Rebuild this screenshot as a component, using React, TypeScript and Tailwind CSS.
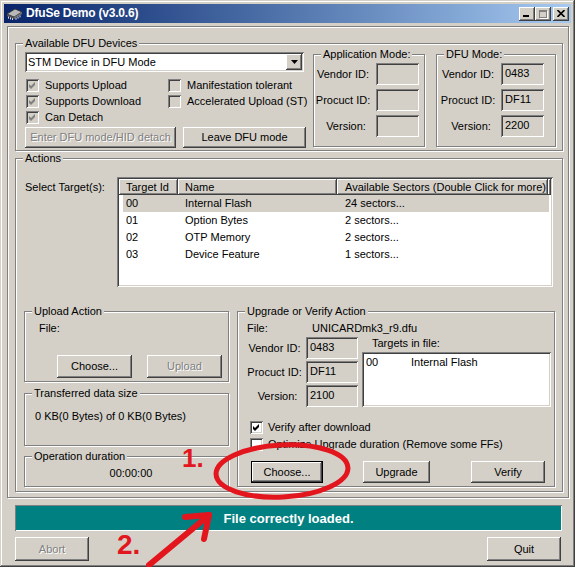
import React from "react";

const raised =
  "bg-[#d4d0c8] shadow-[inset_-1px_-1px_#404040,inset_1px_1px_#fff,inset_-2px_-2px_#808080,inset_2px_2px_#d4d0c8]";
const sunken =
  "shadow-[inset_1px_1px_#808080,inset_-1px_-1px_#fff,inset_2px_2px_#404040,inset_-2px_-2px_#d4d0c8]";
const etched = "border border-[#808080] shadow-[1px_1px_0_#fff,inset_1px_1px_0_#fff]";
const dim = "text-[#808080] [text-shadow:1px_1px_0_#fff]";

type Kids = { children?: React.ReactNode; className?: string };

function Group({ label, className = "", children }: Kids & { label?: string }) {
  return (
    <div className={`relative shrink-0 ${etched} ${className}`}>
      {label && (
        <span className="absolute left-[7px] top-[-7px] whitespace-nowrap bg-[#d4d0c8] px-[2px] leading-[13px]">
          {label}
        </span>
      )}
      {children}
    </div>
  );
}

function Btn({
  children,
  className = "",
  disabled = false,
  def = false,
}: Kids & { disabled?: boolean; def?: boolean }) {
  return (
    <button
      type="button"
      className={`flex shrink-0 items-center justify-center ${raised} ${def ? "border border-black" : ""} ${
        disabled ? dim : "text-black"
      } ${className}`}
    >
      {children}
    </button>
  );
}

function Check({ checked = false, disabled = false }: { checked?: boolean; disabled?: boolean }) {
  return (
    <div
      className={`flex h-[13px] w-[13px] shrink-0 items-center justify-center ${sunken} ${
        disabled ? "bg-[#d4d0c8]" : "bg-white"
      }`}
    >
      {checked && (
        <svg width="7" height="7" viewBox="0 0 7 7">
          <path d="M0 2 L2 4 L6 0 L6 3 L2 7 L0 5 Z" fill={disabled ? "#808080" : "#000"} />
        </svg>
      )}
    </div>
  );
}

function Field({ value = "", className = "" }: { value?: string; className?: string }) {
  return (
    <div className={`h-[22px] shrink-0 bg-[#d4d0c8] pl-[4px] pt-[4px] ${sunken} ${className}`}>{value}</div>
  );
}

function ModeFields({ values }: { values: string[] }) {
  const names = ["Vendor ID:", "Procuct ID:", "Version:"];
  return (
    <div className="flex flex-col gap-[4px] pt-[8px]">
      {names.map((n, i) => (
        <div key={n} className="flex items-center">
          <div className={`w-[56px] text-center ${i === 2 ? "pl-[6px]" : ""}`}>{n}</div>
          <Field value={values[i]} className="ml-[5px] w-[43px]" />
        </div>
      ))}
    </div>
  );
}

const targets = [
  ["00", "Internal Flash", "24 sectors..."],
  ["01", "Option Bytes", "2 sectors..."],
  ["02", "OTP Memory", "2 sectors..."],
  ["03", "Device Feature", "1 sectors..."],
];

function ChipIcon() {
  return (
    <svg width="17" height="13" viewBox="0 0 17 13">
      <polygon points="1,7 9,2 16,5 8,10" fill="#b8b8b8" stroke="#303030" strokeWidth="0.8" />
      <polygon points="1,7 8,10 8,12 1,9" fill="#505050" />
      <polygon points="8,10 16,5 16,7 8,12" fill="#707070" />
      <g stroke="#e0e0e0" strokeWidth="1">
        <line x1="2.5" y1="9.6" x2="2.5" y2="11.6" />
        <line x1="4.5" y1="10.4" x2="4.5" y2="12.4" />
        <line x1="6.5" y1="11.2" x2="6.5" y2="13" />
        <line x1="10" y1="10.8" x2="10" y2="12.8" />
        <line x1="12" y1="9.6" x2="12" y2="11.6" />
        <line x1="14" y1="8.4" x2="14" y2="10.4" />
      </g>
    </svg>
  );
}

function TitleBar() {
  return (
    <div className="flex h-[19px] items-center bg-linear-to-r from-[#0a246a] to-[#a6caf0] pl-[2px] pr-[2px]">
      <ChipIcon />
      <span className="ml-[3px] text-[12px] font-bold tracking-[-0.2px] text-white">DfuSe Demo (v3.0.6)</span>
      <div className="ml-auto flex items-center">
        <div className={`relative h-[14px] w-[16px] ${raised}`}>
          <div className="absolute left-[4px] top-[8px] h-[2px] w-[6px] bg-black" />
        </div>
        <div className={`relative h-[14px] w-[16px] ${raised}`}>
          <div className="absolute left-[4px] top-[3px] h-[8px] w-[8px] border border-t-2 border-[#808080] shadow-[1px_1px_0_#fff]" />
        </div>
        <div className={`ml-[2px] flex h-[14px] w-[16px] items-center justify-center ${raised}`}>
          <svg width="8" height="7" viewBox="0 0 8 7">
            <path d="M0.5 0 L7.5 7 M7.5 0 L0.5 7" stroke="#000" strokeWidth="1.6" />
          </svg>
        </div>
      </div>
    </div>
  );
}

function DevicesGroup() {
  return (
    <Group label="Available DFU Devices" className="h-[108px] w-[548px]">
      <div className="flex pl-[9px] pt-[8px]">
        <div className="flex w-[281px] shrink-0 flex-col">
          <div className={`flex h-[20px] w-[279px] items-center bg-white pl-[3px] pr-[2px] ${sunken}`}>
            <span>STM Device in DFU Mode</span>
            <div className={`ml-auto flex h-[16px] w-[16px] items-center justify-center ${raised}`}>
              <svg width="7" height="4" viewBox="0 0 7 4">
                <polygon points="0,0 7,0 3.5,4" fill="#000" />
              </svg>
            </div>
          </div>
          <div className="mt-[5px] grid grid-cols-[143px_1fr]">
            <div className="flex h-[16px] items-center gap-[6px] pl-[1px]">
              <Check checked disabled />
              <span>Supports Upload</span>
            </div>
            <div className="flex h-[16px] items-center gap-[6px]">
              <Check disabled />
              <span>Manifestation tolerant</span>
            </div>
            <div className="flex h-[16px] items-center gap-[6px] pl-[1px]">
              <Check checked disabled />
              <span>Supports Download</span>
            </div>
            <div className="flex h-[16px] items-center gap-[6px]">
              <Check disabled />
              <span className="whitespace-nowrap">Accelerated Upload (ST)</span>
            </div>
            <div className="flex h-[16px] items-center gap-[6px] pl-[1px]">
              <Check checked disabled />
              <span>Can Detach</span>
            </div>
          </div>
          <div className="mt-[2px] flex gap-[7px]">
            <Btn disabled className="h-[21px] w-[151px]">
              Enter DFU mode/HID detach
            </Btn>
            <Btn className="h-[21px] w-[123px]">Leave DFU mode</Btn>
          </div>
        </div>
        <Group label="Application Mode:" className="ml-[7px] mt-[2px] h-[93px] w-[112px]">
          <div className="pl-[1px]">
            <ModeFields values={["", "", ""]} />
          </div>
        </Group>
        <Group label="DFU Mode:" className="ml-[11px] mt-[2px] h-[93px] w-[120px]">
          <div className="pl-[3px]">
            <ModeFields values={["0483", "DF11", "2200"]} />
          </div>
        </Group>
      </div>
    </Group>
  );
}

function TargetList() {
  return (
    <div className={`flex h-[110px] w-[436px] shrink-0 flex-col bg-white p-[2px] ${sunken}`}>
      <div className="flex h-[16px] shrink-0">
        <div className={`flex w-[59px] items-center pl-[7px] ${raised}`}>Target Id</div>
        <div className={`flex w-[159px] items-center pl-[7px] ${raised}`}>Name</div>
        <div className={`flex w-[211px] items-center whitespace-nowrap pl-[8px] ${raised}`}>
          Available Sectors (Double Click for more)
        </div>
        <div className={`flex-1 ${raised}`} />
      </div>
      {targets.map((t, i) => (
        <div key={t[0]} className={`ml-[4px] flex h-[17px] w-[426px] items-center ${i === 0 ? "bg-[#d4d0c8]" : ""}`}>
          <div className="w-[55px] pl-[3px]">{t[0]}</div>
          <div className="w-[159px] pl-[7px]">{t[1]}</div>
          <div className="pl-[8px]">{t[2]}</div>
        </div>
      ))}
    </div>
  );
}

function UpgradeGroup() {
  const rows: [string, string, string][] = [
    ["Vendor ID:", "0483", ""],
    ["Procuct ID:", "DF11", ""],
    ["Version:", "2100", "pl-[6px]"],
  ];
  return (
    <Group label="Upgrade or Verify Action" className="h-[176px] w-[318px]">
      <div className="flex pl-[9px] pt-[10px]">
        <span className="w-[65px]">File:</span>
        <span>UNICARDmk3_r9.dfu</span>
      </div>
      <div className="mt-[2px] flex pl-[9px]">
        <div className="flex flex-col gap-[2px]">
          {rows.map(([n, v, c]) => (
            <div key={n} className="flex items-center">
              <div className={`w-[55px] text-center ${c}`}>{n}</div>
              <Field value={v} className="ml-[4px] w-[52px]" />
            </div>
          ))}
        </div>
        <div className="ml-[4px] flex flex-col">
          <span className="pl-[10px]">Targets in file:</span>
          <div className={`mt-[2px] h-[55px] w-[189px] bg-white p-[2px] ${sunken}`}>
            <div className="flex h-[15px] items-center pl-[2px] pt-[2px]">
              <span className="w-[45px]">00</span>
              <span>Internal Flash</span>
            </div>
          </div>
        </div>
      </div>
      <div className="mt-[12px] flex h-[17px] items-center gap-[5px] pl-[12px]">
        <Check checked />
        <span>Verify after download</span>
      </div>
      <div className="flex h-[17px] items-center gap-[5px] pl-[12px]">
        <Check />
        <span>Optimize Upgrade duration (Remove some FFs)</span>
      </div>
      <div className="mt-[8px] flex pl-[13px]">
        <Btn def className="h-[22px] w-[72px]">
          Choose...
        </Btn>
        <Btn className="ml-[40px] h-[22px] w-[67px]">Upgrade</Btn>
        <Btn className="ml-[41px] h-[22px] w-[74px]">Verify</Btn>
      </div>
    </Group>
  );
}

function ActionsGroup() {
  return (
    <Group label="Actions" className="mt-[7px] h-[334px] w-[548px]">
      <div className="flex pl-[9px] pt-[18px]">
        <div className="w-[92px] shrink-0 pt-[4px]">Select Target(s):</div>
        <TargetList />
      </div>
      <div className="mt-[24px] flex gap-[8px] pl-[8px]">
        <div className="flex w-[205px] shrink-0 flex-col">
          <Group label="Upload Action" className="h-[71px] w-[205px]">
            <div className="pl-[14px] pt-[10px]">File:</div>
            <div className="mt-[20px] flex gap-[15px] pl-[32px]">
              <Btn className="h-[23px] w-[75px]">Choose...</Btn>
              <Btn disabled className="h-[23px] w-[75px]">
                Upload
              </Btn>
            </div>
          </Group>
          <Group label="Transferred data size" className="mt-[11px] h-[53px] w-[205px]">
            <div className="pl-[10px] pt-[16px]">0 KB(0 Bytes) of 0 KB(0 Bytes)</div>
          </Group>
          <Group label="Operation duration" className="mt-[10px] h-[31px] w-[205px]">
            <div className="pl-[9px] pt-[10px] text-center">00:00:00</div>
          </Group>
        </div>
        <UpgradeGroup />
      </div>
    </Group>
  );
}

function Annotations() {
  return (
    <div className="pointer-events-none absolute inset-0">
      <svg width="575" height="567" className="absolute left-0 top-0">
        <ellipse
          cx="282"
          cy="471"
          rx="66"
          ry="26"
          fill="none"
          stroke="#e3161e"
          strokeWidth="5"
          transform="rotate(-3 282 471)"
        />
        <g stroke="#e3161e" strokeWidth="6" strokeLinecap="round" fill="none">
          <line x1="149" y1="565" x2="208" y2="516" />
          <line x1="185" y1="517" x2="209" y2="515" />
          <line x1="209" y1="515" x2="204" y2="539" />
        </g>
      </svg>
      <div className="absolute left-[182px] top-[443px] text-[26px] font-bold leading-[30px] text-[#e3161e]">1.</div>
      <div className="absolute left-[117px] top-[529px] text-[28px] font-bold leading-[32px] text-[#e3161e]">2.</div>
    </div>
  );
}

export default function App() {
  return (
    <div className="relative h-[567px] w-[575px] overflow-hidden font-['Liberation_Sans',Arial,sans-serif] text-[11px] leading-[13px] text-black">
      <div className="h-[567px] w-[575px] bg-[#d4d0c8] px-[4px] pt-[4px] shadow-[inset_-1px_-1px_#404040,inset_1px_1px_#d4d0c8,inset_-2px_-2px_#808080,inset_2px_2px_#fff]">
        <TitleBar />
        <div className={`ml-[3px] mt-[3px] h-[472px] w-[562px] pl-[7px] pt-[16px] ${etched}`}>
          <DevicesGroup />
          <ActionsGroup />
        </div>
        <div className="ml-[11px] mt-[7px] flex h-[26px] w-[547px] items-center justify-center bg-[#008080] text-[13px] font-bold text-white shadow-[inset_1px_1px_#808080,inset_-1px_-1px_#fff]">
          File correctly loaded.
        </div>
        <div className="ml-[11px] mt-[6px] flex w-[546px] justify-between">
          <Btn disabled className="h-[24px] w-[74px]">
            Abort
          </Btn>
          <Btn className="h-[24px] w-[74px]">Quit</Btn>
        </div>
      </div>
      <Annotations />
    </div>
  );
}
